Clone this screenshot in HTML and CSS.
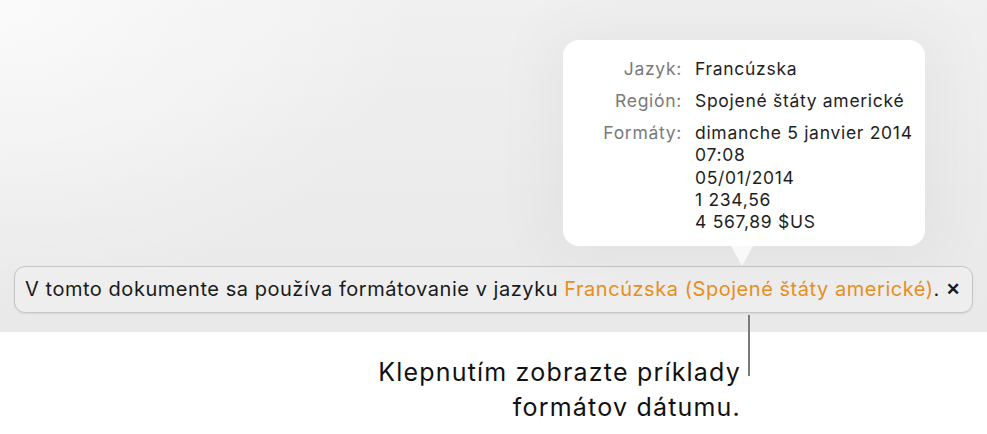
FILE: index.html
```html
<!DOCTYPE html>
<html lang="sk">
<head>
<meta charset="utf-8">
<link rel="stylesheet" href="styles.css">
</head>
<body>
<div class="stage">
  <div class="pop-row">
    <div class="popover">
      <div class="label">Jazyk:</div>
      <div class="value">Francúzska</div>
      <div class="label">Región:</div>
      <div class="value">Spojené štáty americké</div>
      <div class="label">Formáty:</div>
      <div class="value formats">dimanche 5 janvier 2014<br>07:08<br>05/01/2014<br>1 234,56<br>4 567,89 $US</div>
    </div>
  </div>
  <div class="banner">
    <span class="msg">V tomto dokumente sa používa formátovanie v jazyku <span class="accent">Francúzska (Spojené štáty americké)</span>.</span>
    <span class="close">✕</span>
  </div>
</div>
<div class="callout">
  <div class="callout-text">Klepnutím zobrazte príklady<br>formátov dátumu.</div>
  <div class="leader"></div>
</div>
</body>
</html>
```

FILE: styles.css
```css
html, body {
  margin: 0;
  padding: 0;
  background: #ffffff;
}
body {
  width: 987px;
  height: 434px;
  overflow: hidden;
  font-family: "Inter", "Roboto", "Liberation Sans", sans-serif;
  color: #1c1c1c;
}
.stage {
  height: 332px;
  box-sizing: border-box;
  padding-top: 40px;
  background:
    radial-gradient(ellipse 420px 300px at 0 0, rgba(255,255,255,0.7), rgba(255,255,255,0) 100%),
    linear-gradient(180deg, #f0f0f0 0%, #ebebeb 60%, #e9e9e9 100%);
}
.pop-row {
  display: flex;
  justify-content: flex-end;
  padding-right: 62px;
}
.popover {
  position: relative;
  width: 362px;
  height: 206px;
  box-sizing: border-box;
  background: #ffffff;
  border-radius: 16px;
  padding: 18px 0 0 24px;
  display: grid;
  grid-template-columns: 95px auto;
  column-gap: 13px;
  row-gap: 9.5px;
  align-content: start;
  font-size: 17.5px;
  line-height: 22.4px;
  letter-spacing: 0.7px;
  box-shadow: 0 0 60px 20px rgba(0,0,0,0.035);
}
.popover::after {
  content: "";
  position: absolute;
  left: 168px;
  bottom: -20px;
  width: 0;
  height: 0;
  border-left: 11px solid transparent;
  border-right: 11px solid transparent;
  border-top: 20px solid rgba(255,255,255,0.75);
}
.label {
  text-align: right;
  color: #7a7a7a;
}
.value {
  color: #1e1e1e;
  white-space: nowrap;
}
.banner {
  margin: 20px 14px 0 14px;
  height: 47px;
  box-sizing: border-box;
  border: 1.5px solid #c6c6c6;
  border-radius: 11px;
  background: #eeeeee;
  box-shadow: 0 1px 2px rgba(0,0,0,0.08);
  display: flex;
  align-items: center;
  padding: 0 0 1px 10px;
  font-size: 20px;
  letter-spacing: 0.54px;
  color: #1a1a1a;
  white-space: nowrap;
}
.accent {
  color: #e8901e;
}
.close {
  margin-left: 6px;
  font-size: 17px;
  font-weight: 700;
  letter-spacing: 0;
  color: #1a1a1a;
}
.callout {
  display: flex;
  justify-content: flex-end;
  padding-right: 237px;
  margin-top: -17px;
}
.callout-text {
  text-align: right;
  font-size: 25px;
  line-height: 35px;
  letter-spacing: 1.2px;
  padding-top: 40px;
  margin-right: 7px;
  color: #111;
  white-space: nowrap;
}
.leader {
  width: 2px;
  height: 61px;
  background: #7b7b7b;
}
```
